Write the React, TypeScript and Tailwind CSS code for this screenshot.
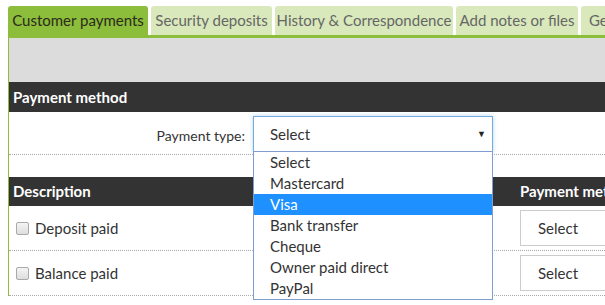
import React from 'react';

const TABS = [
  { label: 'Customer payments', w: 'w-[140px] justify-center', active: true },
  { label: 'Security deposits', w: 'w-[121px] justify-center' },
  { label: 'History & Correspondence', w: 'w-[178px] justify-center' },
  { label: 'Add notes or files', w: 'w-[122px] justify-center' },
  { label: 'General', w: 'w-[80px] pl-[8px]' },
];

const OPTIONS = ['Select', 'Mastercard', 'Visa', 'Bank transfer', 'Cheque', 'Owner paid direct', 'PayPal'];

const ROWS = ['Deposit paid', 'Balance paid'];

const App: React.FC = () => {
  return (
    <div
      className="relative w-[605px] h-[305px] overflow-hidden bg-white pl-[8px] pt-[6px] text-[#333]"
      style={{ fontFamily: 'Lato, "Open Sans", sans-serif' }}
    >
      <div className="flex gap-[3px] w-[700px]">
        {TABS.map((tab) => (
          <div
            key={tab.label}
            className={`${tab.w} shrink-0 h-[29px] flex items-center rounded-t-[3px] text-[15px] whitespace-nowrap ${
              tab.active ? 'bg-[#8cbd3b] text-[#2b2b1b]' : 'bg-[#d9e9bc] text-[#666]'
            }`}
          >
            {tab.label}
          </div>
        ))}
      </div>
      <div className="h-[3px] bg-[#8cbd3b]" />

      <div className="border-l border-[#8cbd3b]">
        <div className="h-[44px] bg-[#dcdcdc]" />

        <div className="h-[30px] bg-[#333] flex items-center pl-[4px] text-white font-bold text-[15px]">
          Payment method
        </div>

        <div className="flex items-start h-[43px] border-b border-dotted border-[#aaa]">
          <div className="w-[236px] shrink-0 pt-[13px] text-right text-[14px]">Payment type:</div>
          <div className="ml-[8px] mt-[4px] w-[240px] shrink-0 h-[36px] border border-[#78aae0] shadow-[0_0_4px_rgba(102,175,233,0.5)] flex items-center justify-between pl-[16px] pr-[6px] text-[15px]">
            <span>Select</span>
            <span className="text-[9px] text-[#222]">▼</span>
          </div>
        </div>

        <div className="h-[22px]" />

        <div className="h-[29px] bg-[#333] flex items-center text-white font-bold text-[15px] whitespace-nowrap">
          <div className="w-[511px] shrink-0 pl-[4px]">Description</div>
          <div className="shrink-0">Payment method</div>
        </div>

        {ROWS.map((row) => (
          <div key={row} className="flex items-center h-[45px] border-b border-dotted border-[#aaa]">
            <div className="w-[511px] shrink-0 flex items-center pl-[7px]">
              <span className="w-[13px] h-[13px] rounded-[2px] border border-[#aaa] bg-gradient-to-b from-[#f4f4f4] to-[#dedede]" />
              <span className="ml-[6px] text-[15px]">{row}</span>
            </div>
            <div className="w-[120px] shrink-0 h-[36px] border border-[#ccc] flex items-center pl-[17px] text-[15px]">
              Select
            </div>
          </div>
        ))}
      </div>

      <div className="absolute left-[253px] top-[151px] w-[240px] border border-[#7f9dcf] bg-white text-[15px]">
        {OPTIONS.map((opt) => (
          <div
            key={opt}
            className={`h-[21px] leading-[21px] pl-[16px] ${opt === 'Visa' ? 'bg-[#1e90ff] text-white' : 'text-[#333]'}`}
          >
            {opt}
          </div>
        ))}
      </div>
    </div>
  );
};

export default App;
